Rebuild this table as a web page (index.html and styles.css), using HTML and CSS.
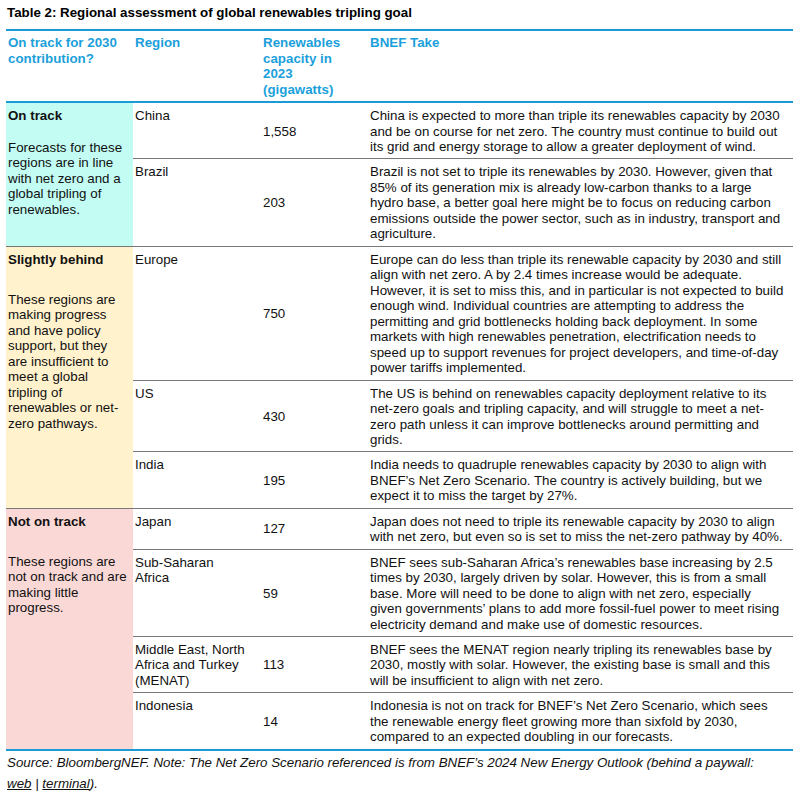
FILE: index.html
```html
<!DOCTYPE html>
<html lang="en">
<head>
<meta charset="utf-8">
<title>Table 2: Regional assessment of global renewables tripling goal</title>
<link rel="stylesheet" href="styles.css">
</head>
<body>
<div class="page">
  <h1 class="title">Table 2: Regional assessment of global renewables tripling goal</h1>
  <table class="assess">
    <colgroup>
      <col class="c-cat"><col class="c-region"><col class="c-cap"><col class="c-take">
    </colgroup>
    <thead>
      <tr>
        <th>On track for 2030<br>contribution?</th>
        <th>Region</th>
        <th>Renewables<br>capacity in<br>2023<br>(gigawatts)</th>
        <th>BNEF Take</th>
      </tr>
    </thead>
    <tbody>
      <tr class="group">
        <td class="cat cat-on" rowspan="2">
          <p class="cat-title">On track</p>
          <p class="cat-desc">Forecasts for these<br>regions are in line<br>with net zero and a<br>global tripling of<br>renewables.</p>
        </td>
        <td>China</td>
        <td class="num">1,558</td>
        <td>China is expected to more than triple its renewables capacity by 2030<br>and be on course for net zero. The country must continue to build out<br>its grid and energy storage to allow a greater deployment of wind.</td>
      </tr>
      <tr>
        <td>Brazil</td>
        <td class="num">203</td>
        <td>Brazil is not set to triple its renewables by 2030. However, given that<br>85% of its generation mix is already low-carbon thanks to a large<br>hydro base, a better goal here might be to focus on reducing carbon<br>emissions outside the power sector, such as in industry, transport and<br>agriculture.</td>
      </tr>
      <tr class="group">
        <td class="cat cat-behind" rowspan="3">
          <p class="cat-title cat-title-wide">Slightly behind</p>
          <p class="cat-desc">These regions are<br>making progress<br>and have policy<br>support, but they<br>are insufficient to<br>meet a global<br>tripling of<br>renewables or net-<br>zero pathways.</p>
        </td>
        <td>Europe</td>
        <td class="num">750</td>
        <td>Europe can do less than triple its renewable capacity by 2030 and still<br>align with net zero. A by 2.4 times increase would be adequate.<br>However, it is set to miss this, and in particular is not expected to build<br>enough wind. Individual countries are attempting to address the<br>permitting and grid bottlenecks holding back deployment. In some<br>markets with high renewables penetration, electrification needs to<br>speed up to support revenues for project developers, and time-of-day<br>power tariffs implemented.</td>
      </tr>
      <tr>
        <td>US</td>
        <td class="num">430</td>
        <td>The US is behind on renewables capacity deployment relative to its<br>net-zero goals and tripling capacity, and will struggle to meet a net-<br>zero path unless it can improve bottlenecks around permitting and<br>grids.</td>
      </tr>
      <tr>
        <td>India</td>
        <td class="num">195</td>
        <td>India needs to quadruple renewables capacity by 2030 to align with<br>BNEF’s Net Zero Scenario. The country is actively building, but we<br>expect it to miss the target by 27%.</td>
      </tr>
      <tr class="group">
        <td class="cat cat-off" rowspan="4">
          <p class="cat-title cat-title-wide">Not on track</p>
          <p class="cat-desc">These regions are<br>not on track and are<br>making little<br>progress.</p>
        </td>
        <td>Japan</td>
        <td class="num">127</td>
        <td>Japan does not need to triple its renewable capacity by 2030 to align<br>with net zero, but even so is set to miss the net-zero pathway by 40%.</td>
      </tr>
      <tr>
        <td>Sub-Saharan<br>Africa</td>
        <td class="num">59</td>
        <td>BNEF sees sub-Saharan Africa’s renewables base increasing by 2.5<br>times by 2030, largely driven by solar. However, this is from a small<br>base. More will need to be done to align with net zero, especially<br>given governments’ plans to add more fossil-fuel power to meet rising<br>electricity demand and make use of domestic resources.</td>
      </tr>
      <tr>
        <td>Middle East, North<br>Africa and Turkey<br>(MENAT)</td>
        <td class="num">113</td>
        <td>BNEF sees the MENAT region nearly tripling its renewables base by<br>2030, mostly with solar. However, the existing base is small and this<br>will be insufficient to align with net zero.</td>
      </tr>
      <tr class="last">
        <td>Indonesia</td>
        <td class="num">14</td>
        <td>Indonesia is not on track for BNEF’s Net Zero Scenario, which sees<br>the renewable energy fleet growing more than sixfold by 2030,<br>compared to an expected doubling in our forecasts.</td>
      </tr>
    </tbody>
  </table>
  <p class="source">Source: BloombergNEF. Note: The Net Zero Scenario referenced is from BNEF’s 2024 New Energy Outlook (behind a paywall:<br><a href="#">web</a> | <a href="#">terminal</a>).</p>
</div>
</body>
</html>
```

FILE: styles.css
```css
html, body {
  margin: 0;
  padding: 0;
  background: #ffffff;
}

.page {
  padding: 5px 13px 0 6px;
  font-family: "Liberation Sans", Arial, sans-serif;
  font-size: 13.33px;
  color: #111111;
}

.title {
  margin: 0 0 8px 1px;
  font-size: 13.33px;
  line-height: 16px;
  font-weight: bold;
  color: #000000;
}

.assess {
  width: 787px;
  border-collapse: collapse;
  table-layout: fixed;
  line-height: 15.5px;
}

.c-cat { width: 127px; }
.c-region { width: 128px; }
.c-cap { width: 107px; }
.c-take { width: 425px; }

.assess th {
  text-align: left;
  vertical-align: top;
  font-weight: bold;
  color: #1b9fdb;
  padding: 4px 2px 4px 2px;
  border-top: 2px solid #1a9ad6;
  border-bottom: 2px solid #1a9ad6;
  white-space: nowrap;
}

.assess td {
  vertical-align: top;
  padding: 5px 2px 3.85px 2px;
  border-top: 1px solid #787878;
  white-space: nowrap;
}

.assess thead + tbody tr:first-child td {
  border-top: none;
}

.assess .last td {
  border-bottom: 2px solid #1a9ad6;
}

.assess td.num {
  vertical-align: middle;
}

.cat-on { background: #c2fcf3; }
.cat-behind { background: #fff2cc; }
.cat-off { background: #f9d8d6; }

.assess .cat-off {
  border-bottom: 2px solid #1a9ad6;
}

.cat-title {
  margin: 0 0 16px 0;
  font-weight: bold;
}

.cat-title-wide {
  margin-bottom: 24.5px;
}

.cat-desc {
  margin: 0;
}

.source {
  margin: 1px 0 0 1px;
  font-style: italic;
  line-height: 21px;
  color: #111111;
}

.source a {
  color: #111111;
  text-decoration: underline;
}
```
